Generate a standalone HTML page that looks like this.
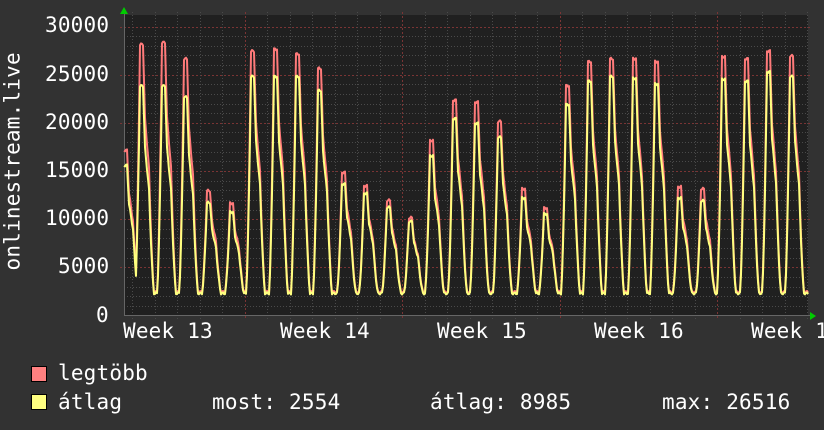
<!DOCTYPE html>
<html><head><meta charset="utf-8"><style>
html,body{margin:0;padding:0;background:#323232;}
body{width:824px;height:430px;overflow:hidden;position:relative;font-family:"DejaVu Sans Mono","Liberation Mono",monospace;color:#fff;}
.t{position:absolute;font-size:21px;line-height:21px;white-space:pre;letter-spacing:0.2px;}
.sq{position:absolute;width:14px;height:14px;border:1px solid #000;}
</style></head><body>
<svg id="g" width="824" height="430" style="position:absolute;left:0;top:0">
<rect x="124" y="15" width="684" height="301" fill="#202020"/>
<g id="grid"></g>
<polyline id="mx" fill="none" stroke="#ff7a7a" stroke-width="2" stroke-linejoin="round"/>
<polyline id="av" fill="none" stroke="#ffff80" stroke-width="2" stroke-linejoin="round"/>
<polygon points="120,14 124,7 128,14" fill="#00cc00"/>
<polygon points="810,312 816,316 810,320" fill="#00cc00"/>
</svg>
<div class="t" style="left:45px;top:15px">30000</div>
<div class="t" style="left:45px;top:64px">25000</div>
<div class="t" style="left:45px;top:112px">20000</div>
<div class="t" style="left:45px;top:160px">15000</div>
<div class="t" style="left:45px;top:208px">10000</div>
<div class="t" style="left:58px;top:256px">5000</div>
<div class="t" style="left:96px;top:305px">0</div>
<div class="t" style="left:-92px;top:155px;transform:rotate(-90deg);width:210px;text-align:center">onlinestream.live</div>
<div class="t" style="left:123px;top:321px">Week 13</div>
<div class="t" style="left:280px;top:321px">Week 14</div>
<div class="t" style="left:437px;top:321px">Week 15</div>
<div class="t" style="left:594px;top:321px">Week 16</div>
<div class="t" style="left:751px;top:321px">Week 17</div>
<div class="sq" style="left:31px;top:366px;background:#ff8080"></div>
<div class="sq" style="left:31px;top:394px;background:#ffff80"></div>
<div class="t" style="left:58px;top:363px">legtöbb</div>
<div class="t" style="left:58px;top:392px">átlag</div>
<div class="t" style="left:212px;top:392px">most: 2554</div>
<div class="t" style="left:430px;top:392px">átlag: 8985</div>
<div class="t" style="left:662px;top:392px">max: 26516</div>
<script>
var ns="http://www.w3.org/2000/svg",g=document.getElementById("grid");
function ln(x1,y1,x2,y2,c,d){var l=document.createElementNS(ns,"line");l.setAttribute("x1",x1);l.setAttribute("y1",y1);l.setAttribute("x2",x2);l.setAttribute("y2",y2);l.setAttribute("stroke",c);if(d)l.setAttribute("stroke-dasharray",d);g.appendChild(l);}
function Y(v){return 315.5-v*289/30000;}
for(var v=1000;v<=30000;v+=1000){var y=Math.round(Y(v))+.5;if(v%5000==0)ln(120,y,812,y,"#7a3434","2,2");else ln(124,y,808,y,"#4a4a4a","1,2");}
for(var i=0;i<40;i++){var x=87+22.5*i;var xx=Math.round(x)+.5;if(xx<124||xx>812)continue;var wk=(i%7==0);ln(xx,12,xx,319,wk?"#7a3434":"#4a4a4a",wk?"2,2":"1,2");}
ln(124,315.5,812,315.5,"#666");ln(124.5,12,124.5,316,"#666");
var P=[[126,17000,16000],[142,28000,24500],[164,28200,24500],[186,26500,23300],[209,12800,12000],[232,11500,11000],[253,27300,25500],[276,27500,25500],[298,27000,25500],[320,25500,24000],[344,14700,14000],[366,13300,13000],[389,11800,11500],[411,10000,10000],[432,18000,17000],[455,22200,21000],[477,22000,20500],[500,20000,19000],[524,13000,12500],[546,11000,10800],[568,23700,22500],[590,26200,25000],[612,26500,25500],[635,26500,25300],[657,26200,24700],[680,13200,12500],[703,13000,12200],[724,26700,25200],[747,26500,25000],[769,27300,26000],[792,26800,25500]];
function f(t){
 if(t<-7)return 0; if(t<-2)return Math.pow((t+7)/5,1.5);
 if(t<1)return 1; if(t<3)return 1-(t-1)/2*0.3;
 if(t<7)return 0.7-(t-3)/4*0.2; if(t<12)return 0.5*Math.pow(1-(t-7)/5,1.4); return 0;}
var a=[],b=[];
for(var x=124;x<=808;x++){var m=2300,vm=m,va=m;
 for(var i=0;i<P.length;i++){var k=f(x-P[i][0]);if(k>0){vm=Math.max(vm,m+(P[i][1]-m)*k);va=Math.max(va,m+(P[i][2]-m)*k*0.97);}}
 var d=Math.sin(x*1.7)*120;vm+=d+150;va+=d;
 a.push(x+","+Y(vm).toFixed(1));b.push(x+","+Y(va).toFixed(1));}
document.getElementById("mx").setAttribute("points",a.join(" "));
document.getElementById("av").setAttribute("points",b.join(" "));
</script>
</body></html>
